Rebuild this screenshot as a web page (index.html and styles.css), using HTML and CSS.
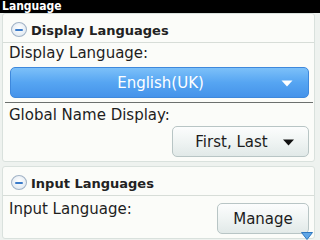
FILE: index.html
```html
<!DOCTYPE html>
<html>
<head>
<meta charset="utf-8">
<link rel="stylesheet" href="styles.css">
</head>
<body>
<div class="titlebar">Language</div>
<div class="screen">
  <div class="card">
    <div class="section-head">
      <span class="collapse"><span class="bar"></span></span>
      <span class="head-text">Display Languages</span>
    </div>
    <div class="label first">Display Language:</div>
    <div class="dropdown-blue">
      <span class="dd-text">English(UK)</span>
      <svg class="tri" width="12" height="7" viewBox="0 0 12 7"><path d="M0.5 0.5 L11.5 0.5 L6 6.5 Z" fill="#fff"/></svg>
    </div>
    <div class="rule"></div>
    <div class="label second">Global Name Display:</div>
    <div class="row-right">
      <div class="btn wide">
        <span>First, Last</span>
        <svg class="tri-dark" width="11" height="7" viewBox="0 0 11 7"><path d="M0 0.5 L11 0.5 L5.5 6.5 Z" fill="#111"/></svg>
      </div>
    </div>
  </div>
  <div class="card card2">
    <div class="section-head">
      <span class="collapse"><span class="bar"></span></span>
      <span class="head-text">Input Languages</span>
    </div>
    <div class="input-row">
      <div class="label third">Input Language:</div>
      <div class="btn manage">Manage</div>
    </div>
  </div>
  <svg class="scroll-arrow" width="12" height="8" viewBox="0 0 12 8"><path d="M0.5 0.5 L11.5 0.5 L6 7.5 Z" fill="#5fa6e6" stroke="#2f78c0" stroke-width="1"/></svg>
</div>
</body>
</html>
```
FILE: styles.css
```css
html, body {
  margin: 0;
  padding: 0;
}
body {
  width: 320px;
  height: 240px;
  overflow: hidden;
  background: #eef2ef;
  font-family: "DejaVu Sans", "Liberation Sans", sans-serif;
  color: #1e1e1e;
}
.titlebar {
  height: 13px;
  background: #000;
  color: #fff;
  font-family: "DejaVu Sans Condensed", "DejaVu Sans", sans-serif;
  font-weight: bold;
  font-size: 12px;
  line-height: 13px;
  padding-left: 2px;
  overflow: hidden;
}
.screen {
  position: relative;
  height: 227px;
  padding: 0 5px 0 2px;
}
.card {
  background: #fbfcf9;
  border: 1px solid #d9e1dd;
  border-radius: 3px;
  padding-bottom: 4px;
}
.card2 {
  margin-top: 4px;
}
.section-head {
  display: flex;
  align-items: center;
  height: 29px;
  box-sizing: border-box;
  padding: 3px 0 0 8px;
  border-bottom: 1px solid #d7ddd8;
}
.collapse {
  width: 16px;
  height: 15px;
  border-radius: 50%;
  border: 1px solid #a2b3c6;
  background: radial-gradient(circle at 50% 40%, #ffffff 0%, #e6edf4 65%, #c8d4e2 100%);
  display: flex;
  align-items: center;
  justify-content: center;
  margin-right: 4px;
  box-sizing: border-box;
}
.bar {
  width: 8px;
  height: 2px;
  background: #3b7bc9;
  border-radius: 1px;
}
.head-text {
  font-weight: bold;
  font-size: 13px;
  color: #222;
  margin-top: 2px;
}
.label {
  font-size: 15px;
  line-height: 18px;
  padding-left: 6px;
}
.label.first {
  padding-top: 1px;
}
.label.second {
  padding-top: 3px;
}
.label.third {
  padding-top: 4px;
}
.dropdown-blue {
  margin: 5px 5px 0 7px;
  height: 31px;
  border-radius: 5px;
  background: linear-gradient(#7cc0f9, #56a5f2 50%, #4593ea);
  border: 1px solid #3e88dc;
  box-sizing: border-box;
  position: relative;
  display: flex;
  align-items: center;
  justify-content: center;
  color: #fff;
  font-size: 15px;
}
.dd-text {
  margin-left: 2px;
}
.tri {
  position: absolute;
  right: 15px;
  top: 12px;
}
.rule {
  margin: 4px 1px 0 2px;
  height: 1px;
  background: #6c706e;
}
.row-right {
  display: flex;
  justify-content: flex-end;
  padding: 2px 5px 0 0;
}
.btn {
  height: 31px;
  box-sizing: border-box;
  border: 1px solid #b8c5c5;
  border-radius: 5px;
  background: linear-gradient(#fcfdfd, #eef3f2 55%, #e1e9e8);
  display: flex;
  align-items: center;
  justify-content: center;
  font-size: 15px;
  color: #1c1c1c;
}
.wide {
  width: 137px;
  gap: 15px;
  padding-left: 8px;
}
.tri-dark {
  margin-top: 1px;
}
.input-row {
  display: flex;
  justify-content: space-between;
  align-items: flex-start;
  padding-right: 5px;
}
.manage {
  width: 92px;
  margin-top: 7px;
  height: 31px;
}
.scroll-arrow {
  position: absolute;
  right: 7px;
  bottom: 0;
}
```
